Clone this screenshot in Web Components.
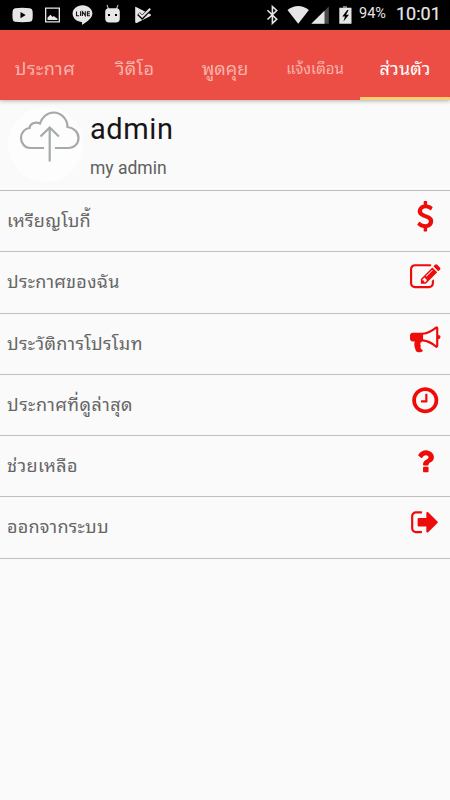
<!DOCTYPE html>
<html lang="th">
<head>
<meta charset="utf-8">
<meta name="viewport" content="width=device-width, initial-scale=1">
<title>admin</title>
<style>
    body {
        margin: 0;
        background: #fafafa;
        font-family: Roboto, "Noto Sans Thai Looped", "Droid Sans Thai", Loma, Waree, "Noto Sans", sans-serif;
    }
</style>
</head>
<body>
<app-screen>
    <status-bar slot="status"></status-bar>
    <tab-bar slot="tabs">
        <tab-item style="--size: 18px; --spacing: .5px">ประกาศ</tab-item>
        <tab-item style="--size: 18px; --spacing: .3px">วิดีโอ</tab-item>
        <tab-item style="--size: 18px">พูดคุย</tab-item>
        <tab-item style="--size: 15px">แจ้งเตือน</tab-item>
        <tab-item style="--size: 18px; --spacing: .2px" selected>ส่วนตัว</tab-item>
    </tab-bar>
    <profile-header>
        <span slot="name">admin</span>
        <span slot="detail">my admin</span>
    </profile-header>
    <menu-row icon="dollar" style="--spacing: .25px">เหรียญโบกี้</menu-row>
    <menu-row icon="edit" style="--spacing: .3px">ประกาศของฉัน</menu-row>
    <menu-row icon="bullhorn" style="--spacing: .35px">ประวัติการโปรโมท</menu-row>
    <menu-row icon="clock" style="--spacing: .5px">ประกาศที่ดูล่าสุด</menu-row>
    <menu-row icon="question" style="--spacing: .4px">ช่วยเหลือ</menu-row>
    <menu-row icon="signout" style="--spacing: .25px">ออกจากระบบ</menu-row>
</app-screen>

<template id="app-screen">
<style>
    :host {
        display: flex;
        flex-direction: column;
        height: 800px;
        overflow: hidden;
    }

    main {
        flex: 1;
    }
</style>
<slot name="status"></slot>
<slot name="tabs"></slot>
<main><slot></slot></main>
</template>

<template id="status-bar">
<style>
    :host {
        display: flex;
        justify-content: space-between;
        align-items: center;
        height: 30px;
        box-sizing: border-box;
        padding: 0 10px 0 12px;
        background: #000;
        color: #e6e6e6;
    }

    div {
        display: flex;
        align-items: center;
    }

    svg {
        display: block;
        fill: #e6e6e6;
    }

    .battery {
        font-size: 14.500px;
        line-height: 28px;
        height: 30px;
        margin-left: 7px;
        width: 27px;
        white-space: nowrap;
    }

    .time {
        font-size: 18px;
        line-height: 28px;
        height: 30px;
        margin-left: 10px;
        width: 44px;
        white-space: nowrap;
        -webkit-text-stroke: .2px #e6e6e6;
    }
</style>
<div>
    <svg width="142" height="30" viewBox="12 0 142 30">
        <path d="M15 8.2q7.500-.8 15 0 2.500.3 2.600 3 .3 3.800 0 7.600-.1 2.700-2.600 3-7.500.8-15 0-2.200-.3-2.400-3-.4-3.800 0-7.600.2-2.700 2.400-3zM20.500 12v6.200l5.200-3.100z" fill-rule="evenodd"/>
        <path d="M45 7.500h15v15H45zM46.300 8.800v12.400h12.400V8.800zM47.500 20v-2.600l3-2.700 2.200 2.300 1-1 3.800 2.800V20z" fill-rule="evenodd"/>
        <path d="M82.500 5.200c5.600 0 9.900 3.700 9.900 8.400 0 4-4.500 8-9.700 10.900-.8.400-.9-.2-.7-1.200l.1-1.100c-5.300-.3-9.500-3.900-9.500-8.600 0-4.700 4.300-8.400 9.900-8.400z"/>
        <path d="M76.500 11.600v4.100h2.600M80.600 11.300v4.700M82.400 16v-4.300l2.900 3.900v-4.300M90 11.800h-2.600v3.900H90M87.400 13.800h2.300" fill="none" stroke="#111" stroke-width="1.100"/>
        <path d="M107 5l1.500 4M118 5l-1.500 4" stroke="#bbb" stroke-width="1.100"/>
        <path d="M107.500 8.300h10q2.300.7 2.300 3.200v7q0 4-4 4h-6.600q-4 0-4-4v-7q0-2.500 2.300-3.200zM108 13.900v2h2v-2zM115 13.900v2h2v-2z" fill-rule="evenodd"/>
        <path d="M135.500 6.700l15 7.600q1 .8 0 1.600l-13.800 7q-1.500.5-1.500-1.200V7.500z"/>
        <path d="M138.500 13.700l3.700 3.600 8.600-8.800" fill="none" stroke="#000" stroke-width="3.800"/>
        <path d="M139 13.500l3.200 3.200 8-8" fill="none" stroke="#e6e6e6" stroke-width="2"/>
    </svg>
</div>
<div>
    <svg width="86" height="30" viewBox="266 0 86 30">
        <path d="M267.500 10.300l9.200 9-4.300 4V6.500l4.300 4-9.200 9" fill="none" stroke="#e6e6e6" stroke-width="1.600"/>
        <path d="M287.500 10.100q10.700-8 21.400 0L298.200 23.800z"/>
        <path d="M328.800 6.500v17.300h-17.500z" fill="#4b4b4b"/>
        <path d="M324.500 10.700v13.100h-13.200z"/>
        <path d="M343 6h4v2h-4z" fill="#777"/>
        <path d="M339.300 7.700h12.200v16h-12.200zM347.200 10l-4.900 6.400h2.700l-1.600 5 5.600-6.700h-2.900l2.500-4.700z" fill-rule="evenodd"/>
    </svg>
    <span class="battery">94%</span>
    <span class="time">10:01</span>
</div>
</template>

<template id="tab-bar">
<style>
    :host {
        display: grid;
        grid-template-columns: repeat(5, 1fr);
        height: 70px;
        background: #ec4e45;
        box-shadow: 0 1px 4px rgba(0, 0, 0, .3);
    }
</style>
<slot></slot>
</template>

<template id="tab-item">
<style>
    :host {
        display: flex;
        align-items: center;
        justify-content: center;
        box-sizing: border-box;
        height: 70px;
        padding-top: 11px;
        border-bottom: 3px solid transparent;
        color: #f8b3ab;
        font-size: var(--size);
        letter-spacing: var(--spacing, 0);
        line-height: 30px;
        white-space: nowrap;
    }

    :host([selected]) {
        color: #fff;
        border-bottom-color: #fccb75;
    }
</style>
<slot></slot>
</template>

<template id="profile-header">
<style>
    :host {
        display: flex;
        height: 91px;
        box-sizing: border-box;
        border-bottom: 1px solid #bdbdbd;
        padding-left: 8px;
    }

    .avatar {
        width: 75px;
        height: 75px;
        margin: 7px 7px 0 0;
        border-radius: 50%;
        background: #fdfdfd;
    }

    .name {
        color: #161616;
        font-size: 29px;
        letter-spacing: .6px;
        line-height: 34px;
        margin-top: 12px;
    }

    .detail {
        color: #606060;
        font-size: 17.500px;
        line-height: 22px;
        margin-top: 11px;
    }
</style>
<svg class="avatar" viewBox="8 107 75 75" fill="none" stroke="#a5aaa9" stroke-width="2.200">
    <path d="M44 148H30c-5 0-9-4.500-9-10 0-5.500 4-9.500 8.500-10 .5-4 5.500-7 10.500-4.500 2-6 7-11 13.500-11C61 112.500 67.500 119 67.500 127c6 .5 11 5 11 11S74 148 68.500 148H55"/>
    <path d="M49.700 161.500V128M40.500 136.500l9.200-9 9.200 9"/>
</svg>
<div>
    <div class="name"><slot name="name"></slot></div>
    <div class="detail"><slot name="detail"></slot></div>
</div>
</template>

<template id="menu-row">
<style>
    :host {
        display: flex;
        justify-content: space-between;
        height: 61.250px;
        box-sizing: border-box;
        border-bottom: 1px solid #bfbfbf;
        padding: 0 9.500px 0 7px;
        color: #666;
        font-size: 18px;
        letter-spacing: var(--spacing, 0);
        line-height: 60px;
        white-space: nowrap;
    }

    svg {
        width: 30.500px;
        height: 30.500px;
        margin-top: 10px;
        fill: #f00b0b;
    }
</style>
<span><slot></slot></span>
<svg viewBox="0 0 1792 1792"><path></path></svg>
</template>

<script>
const icons = {
    dollar: "M1362 1185q0 153-99.500 263.500t-258.500 136.500v175q0 14-9 23t-23 9h-135q-13 0-22.500-9.500t-9.500-22.500v-175q-66-9-127.500-31t-101.500-44.500-74-48-46.500-37.500-17.500-18q-17-21-2-41l103-135q7-10 23-12 15-2 24 9l2 2q113 99 243 125 37 8 74 8 81 0 142.500-43t61.500-122q0-28-15-53t-33.500-42-58.500-37.500-66-32-80-32.500q-39-16-61.500-25t-61.500-26.500-62.500-31-56.500-35.500-53.500-42.500-43.500-49-35.500-58-21-66.500-8.500-78q0-138 98-242t255-134v-180q0-13 9.500-22.500t22.500-9.500h135q14 0 23 9t9 23v176q57 6 110.500 23t87 33.500 63.500 37.500 39 29 15 14q17 18 5 38l-81 146q-8 15-23 16-14 3-27-7-3-3-14.500-12t-39-26.500-58.500-32-74.500-26-85.500-11.500q-95 0-155 43t-60 111q0 26 8.500 48t29.500 41.500 39.500 33 56 31 60.500 27 70 27.500q53 20 81 31.500t76 35 75.500 42.500 62 50 53 63.500 31.500 76.500 13 94z",
    edit: "M888 1184l116-116-152-152-116 116v56h96v96h56zm440-720q-16-16-33 1l-350 350q-17 17-1 33t33-1l350-350q17-17 1-33zm80 594v190q0 119-84.500 203.500t-203.500 84.500h-832q-119 0-203.500-84.500t-84.500-203.500v-832q0-119 84.500-203.500t203.500-84.500h832q63 0 117 25 15 7 18 23 3 17-9 29l-49 49q-14 14-32 8-23-6-45-6h-832q-66 0-113 47t-47 113v832q0 66 47 113t113 47h832q66 0 113-47t47-113v-126q0-13 9-22l64-64q15-15 35-7t20 29zm-96-738l288 288-672 672h-288v-288zm444 132l-92 92-288-288 92-92q28-28 68-28t68 28l152 152q28 28 28 68t-28 68z",
    bullhorn: "M1664 640q53 0 90.500 37.500t37.500 90.500-37.500 90.500-90.500 37.500v384q0 52-38 90t-90 38q-417-347-812-380-58 19-91 66t-31 100.500 40 92.500q-20 33-23 65.500t6 58 33.500 55 48 50 61.500 50.500q-29 58-111.500 83t-168.500 11.500-132-55.500q-7-23-29.500-87.500t-32-94.500-23-89-15-101 3.500-98.500 22-110.500h-122q-66 0-113-47t-47-113v-192q0-66 47-113t113-47h480q435 0 896-384 52 0 90 38t38 90v384zm-128 604v-954q-394 302-768 343v270q377 42 768 341z",
    clock: "M1024 544v448q0 14-9 23t-23 9h-320q-14 0-23-9t-9-23v-64q0-14 9-23t23-9h224v-352q0-14 9-23t23-9h64q14 0 23 9t9 23zm416 352q0-148-73-273t-198-198-273-73-273 73-198 198-73 273 73 273 198 198 273 73 273-73 198-198 73-273zm224 0q0 209-103 385.500t-279.500 279.500-385.500 103-385.500-103-279.500-279.500-103-385.500 103-385.500 279.500-279.500 385.500-103 385.500 103 279.500 279.500 103 385.500z",
    question: "M1088 1256v240q0 16-12 28t-28 12h-240q-16 0-28-12t-12-28v-240q0-16 12-28t28-12h240q16 0 28 12t12 28zm316-600q0 54-15.500 101t-35 76.500-55 59.500-57.500 43.500-61 35.500q-41 23-68.500 65t-27.500 67q0 17-12 32.500t-28 15.500h-240q-15 0-25.500-18.500t-10.500-37.500v-45q0-83 65-156.500t143-108.500q59-27 84-56t25-76q0-42-46.500-74t-107.500-32q-65 0-108 29-35 25-107 115-13 16-31 16-12 0-25-8l-164-125q-13-10-15.500-25t5.500-28q160-266 464-266 80 0 161 31t146 83 106 127.500 41 158.500z",
    signout: "M704 1440q0 4 1 20t.5 26.500-3 23.500-10 19.500-20.500 6.500h-320q-119 0-203.500-84.500t-84.500-203.500v-704q0-119 84.500-203.500t203.500-84.500h320q13 0 22.500 9.500t9.500 22.500q0 4 1 20t.5 26.500-3 23.500-10 19.500-20.500 6.500h-320q-66 0-113 47t-47 113v704q0 66 47 113t113 47h312l11.500 1 11.500 3 8 5.500 7 9 2 13.500zm928-544q0 26-19 45l-544 544q-19 19-45 19t-45-19-19-45v-288h-448q-26 0-45-19t-19-45v-384q0-26 19-45t45-19h448v-288q0-26 19-45t45-19 45 19l544 544q19 19 19 45z"
}

class TemplateElement extends HTMLElement {
    constructor() {
        super()
        const template = document.getElementById(this.localName)
        const shadow = this.attachShadow({mode: "open"})
        shadow.append(template.content.cloneNode(true))
    }
}

class AppScreen extends TemplateElement {}
class StatusBar extends TemplateElement {}
class TabBar extends TemplateElement {}
class TabItem extends TemplateElement {}
class ProfileHeader extends TemplateElement {}

class MenuRow extends TemplateElement {
    connectedCallback() {
        const path = this.shadowRoot.querySelector("path")
        path.setAttribute("d", icons[this.getAttribute("icon")])
    }
}

customElements.define("app-screen", AppScreen)
customElements.define("status-bar", StatusBar)
customElements.define("tab-bar", TabBar)
customElements.define("tab-item", TabItem)
customElements.define("profile-header", ProfileHeader)
customElements.define("menu-row", MenuRow)
</script>
</body>
</html>
